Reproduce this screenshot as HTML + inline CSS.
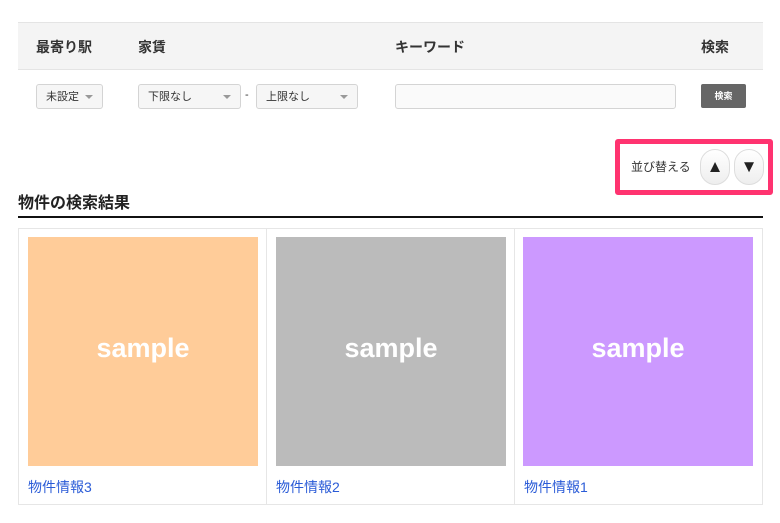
<!DOCTYPE html><html><head><meta charset="utf-8"><style>
*{box-sizing:border-box;margin:0;padding:0}
body{width:780px;height:523px;background:#fff;font-family:"Liberation Sans","Noto Sans CJK JP",sans-serif;color:#333;position:relative;overflow:hidden}
.a{position:absolute}
.hd{left:18px;top:22px;width:745px;height:48px;background:#f4f4f4;border-top:1px solid #e4e4e4;border-bottom:1px solid #e4e4e4}
.th{font-size:14px;font-weight:bold;top:37px;color:#333}
.sel{top:84px;height:25px;border:1px solid #d4d4d4;border-radius:3px;background:#f6f6f6;font-size:11px;line-height:24px;padding-left:9px;color:#333}
.sel:after{content:"";position:absolute;right:9px;top:10px;border:4px solid transparent;border-top:4px solid #999}
.img{top:237px;width:230px;height:229px;color:#fff;font-size:27px;font-weight:bold;display:flex;align-items:center;justify-content:center;padding-bottom:6px}
.lk{top:477px;font-size:14px;color:#2a5bd7}
.cb{width:30px;height:36px;top:149px;border:1px solid #ddd;border-radius:15px;background:linear-gradient(#fff,#eee);font-size:17px;display:flex;align-items:center;justify-content:center;color:#222}
</style></head><body>
<div class="a hd"></div>
<div class="a th" style="left:36px">最寄り駅</div>
<div class="a th" style="left:138px">家賃</div>
<div class="a th" style="left:395px">キーワード</div>
<div class="a th" style="left:701px">検索</div>
<div class="a sel" style="left:36px;width:67px">未設定</div>
<div class="a sel" style="left:138px;width:103px">下限なし</div>
<div class="a" style="left:245px;top:89px;font-size:11px">-</div>
<div class="a sel" style="left:256px;width:102px">上限なし</div>
<div class="a" style="left:395px;top:84px;width:281px;height:25px;border:1px solid #d4d4d4;border-radius:3px;background:#fafafa"></div>
<div class="a" style="left:701px;top:84px;width:45px;height:24px;background:#666;border-radius:2px;color:#fff;font-size:9px;font-weight:bold;line-height:24px;text-align:center">検索</div>
<div class="a" style="left:615px;top:139px;width:158px;height:56px;border:5px solid #ff3370;border-radius:3px"></div>
<div class="a" style="left:631px;top:158px;font-size:12px">並び替える</div>
<div class="a cb" style="left:700px">▲</div>
<div class="a cb" style="left:734px">▼</div>
<div class="a" style="left:18px;top:189px;font-size:16px;font-weight:bold;color:#222">物件の検索結果</div>
<div class="a" style="left:18px;top:216px;width:745px;height:2px;background:#111"></div>
<div class="a" style="left:18px;top:228px;width:745px;height:277px;border:1px solid #e6e6e6"></div>
<div class="a" style="left:266px;top:228px;width:1px;height:277px;background:#e6e6e6"></div>
<div class="a" style="left:514px;top:228px;width:1px;height:277px;background:#e6e6e6"></div>
<div class="a img" style="left:28px;background:#ffcc99">sample</div>
<div class="a img" style="left:276px;background:#bbbbbb">sample</div>
<div class="a img" style="left:523px;background:#cc99ff">sample</div>
<div class="a lk" style="left:28px">物件情報3</div>
<div class="a lk" style="left:276px">物件情報2</div>
<div class="a lk" style="left:524px">物件情報1</div>
</body></html>
